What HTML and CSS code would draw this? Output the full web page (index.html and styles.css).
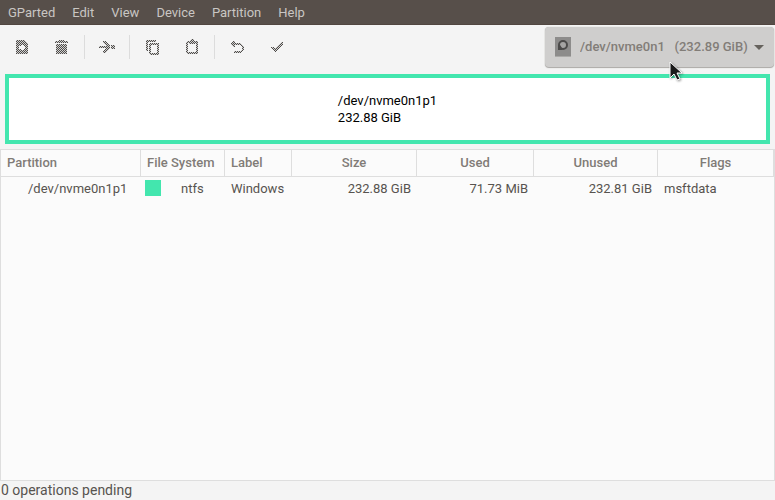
FILE: index.html
```
<!DOCTYPE html>
<html lang="en">
<head>
<meta charset="utf-8">
<title>GParted</title>
<link rel="stylesheet" href="styles.css">
</head>
<body>
<svg class="defs" width="0" height="0" aria-hidden="true">
  <defs>
    <pattern id="dither" width="2" height="2" patternUnits="userSpaceOnUse">
      <rect width="2" height="2" fill="#d2d1d0"/>
      <path d="M0 0h1v1H0zM1 1h1v1H1z" fill="#4e4c4a"/>
    </pattern>
  </defs>
</svg>
<nav class="menubar">
  <button>GParted</button>
  <button>Edit</button>
  <button>View</button>
  <button>Device</button>
  <button>Partition</button>
  <button>Help</button>
</nav>
<header class="toolbar">
  <button class="tool" aria-label="New" disabled><svg viewBox="0 0 16 16"><path fill-rule="evenodd" d="M2 1h9l3 4v10H2zM7 6v1H5v3h2v1h3v-1h1V7h-1V6z"/></svg></button>
  <button class="tool" aria-label="Delete" disabled><svg viewBox="0 0 16 16"><path d="M1 2h4V1h5v1h4v2H1zM2 5h11v10H2z"/></svg></button>
  <span class="divider"></span>
  <button class="tool" aria-label="Resize/Move" disabled><svg viewBox="0 0 16 16"><path d="M0 7h7L4 4V2h2l5 5v2l-5 5H4v-2l3-3H0zM12 6h3l1 1v2l-1 1h-3z"/></svg></button>
  <span class="divider"></span>
  <button class="tool" aria-label="Copy" disabled><svg viewBox="0 0 16 16"><path fill-rule="evenodd" d="M2 1h10v2H4v9H2zM6 4h8l1 1v10l-1 1H6l-1-1V5zM7 6v8h6V6z"/></svg></button>
  <button class="tool" aria-label="Paste" disabled><svg viewBox="0 0 16 16"><path fill-rule="evenodd" d="M3 2h3V1l1-1h2l1 1v1h3l1 1v11l-1 1H3l-1-1V3zM4 4v9h8V4h-1v1H5V4z"/></svg></button>
  <span class="divider"></span>
  <button class="tool" aria-label="Undo" disabled><svg viewBox="0 0 16 16"><path d="M1 5l4-3h1v2h5l3 2 1 2v2l-1 2-3 2H5v-2h6l2-2V8l-2-2H6v2H5z"/></svg></button>
  <button class="tool" aria-label="Apply" disabled><svg viewBox="0 0 16 16"><path d="M2 8h2l2 2 6-7h2v2l-7 8H6L2 9z"/></svg></button>
  <label class="device">
    <svg class="disk" viewBox="0 0 16 20" aria-hidden="true"><rect width="16" height="20" fill="#8d8c8b"/><path d="M0 19h16v1H0z" fill="#aaa9a7"/><circle cx="8" cy="8" r="4" fill="#a5a4a3" stroke="#4b4a49" stroke-width="2"/><path d="M3 8h2l2 3v2H3z" fill="#4b4a49"/></svg>
    <select aria-label="Device"><option>/dev/nvme0n1&nbsp;&nbsp; (232.89 GiB)</option></select>
    <svg class="caret" viewBox="0 0 10 5" aria-hidden="true"><path d="M0 0h10L5 5z"/></svg>
    <svg class="pointer" viewBox="0 0 14 21" aria-hidden="true"><path d="M1 1v16l4-4 3 6 3-1-3-6h5z"/></svg>
  </label>
</header>
<section class="visual">
  <p>/dev/nvme0n1p1<br>232.88 GiB</p>
</section>
<main class="list">
  <table>
    <colgroup><col class="c-part"><col class="c-fs"><col class="c-label"><col class="c-size"><col class="c-used"><col class="c-unused"><col></colgroup>
    <thead>
      <tr><th>Partition</th><th>File System</th><th>Label</th><th class="mid">Size</th><th class="mid">Used</th><th class="mid">Unused</th><th class="mid">Flags</th></tr>
    </thead>
    <tbody>
      <tr><td class="path">/dev/nvme0n1p1</td><td class="fs"><span class="swatch"></span>ntfs</td><td>Windows</td><td class="num">232.88 GiB</td><td class="num">71.73 MiB</td><td class="num">232.81 GiB</td><td>msftdata</td></tr>
    </tbody>
  </table>
</main>
<footer class="status">0 operations pending</footer>
</body>
</html>
```
FILE: styles.css
```
* { box-sizing: border-box; }
body {
  margin: 0;
  min-height: 100vh;
  display: flex;
  flex-direction: column;
  background: #f4f4f4;
  color: #57534f;
  font: 13px/18px Roboto, "Noto Sans", sans-serif;
}
button, select { font: inherit; color: inherit; border: 0; background: none; margin: 0; padding: 0; }
.defs { position: absolute; }
.menubar {
  display: flex;
  gap: 1px;
  height: 25px;
  background: #574f4a;
  border-bottom: 1px solid #514640;
  color: #c9c6c3;
}
.menubar button { padding: 1px 8px 0; }
.toolbar { display: flex; align-items: center; height: 44px; padding-left: 2px; }
.tool { width: 40px; height: 40px; display: flex; align-items: center; justify-content: center; }
.tool svg { width: 16px; height: 16px; fill: url(#dither); shape-rendering: crispEdges; }
.divider { width: 1px; height: 24px; margin: 0 2px; background: #dcdcdc; }
.device {
  position: relative;
  display: flex;
  align-items: center;
  gap: 6px;
  height: 40px;
  margin-left: auto;
  margin-right: 1px;
  padding: 0 10px;
  border-radius: 4px;
  background: #cfcecd;
  box-shadow: 0 1px 1px #aaa8a6, 0 0 1px #aaa8a6;
  color: #827d78;
  font-weight: 500;
}
.device select { appearance: none; }
.disk { width: 16px; height: 20px; margin-right: 3px; }
.caret { width: 10px; height: 5px; fill: #66625d; }
.pointer {
  position: absolute;
  right: 91px;
  top: 34px;
  width: 14px;
  height: 21px;
  fill: #1a1a1a;
  stroke: #fff;
  filter: drop-shadow(1px 1px 1px #0006);
}
.visual {
  display: flex;
  align-items: center;
  justify-content: center;
  height: 70px;
  margin: 5px;
  border: 4px solid #43e6ae;
  background: #fff;
  color: #000;
}
.visual p { margin: 0; line-height: 17px; }
.list { flex: 1; border: 1px solid #dedede; background: #fbfbfb; }
table { width: 100%; table-layout: fixed; border-collapse: separate; border-spacing: 0; }
.c-part { width: 140px; }
.c-fs { width: 84px; }
.c-label { width: 67px; }
.c-size { width: 125px; }
.c-used { width: 117px; }
.c-unused { width: 124px; }
th, td { padding: 0 6px; text-align: left; white-space: nowrap; }
th {
  height: 27px;
  border-right: 1px solid #dedede;
  border-bottom: 1px solid #dedede;
  color: #817c77;
  font-weight: 500;
}
td { height: 24px; }
th.mid { text-align: center; }
td.num { text-align: right; }
td.path { padding-left: 27px; }
td.fs { padding-left: 4px; }
.swatch {
  display: inline-block;
  width: 16px;
  height: 16px;
  margin-right: 20px;
  background: #43e6ae;
  vertical-align: -3px;
}
.status { height: 19px; padding-left: 1px; font-size: 14px; }
```
